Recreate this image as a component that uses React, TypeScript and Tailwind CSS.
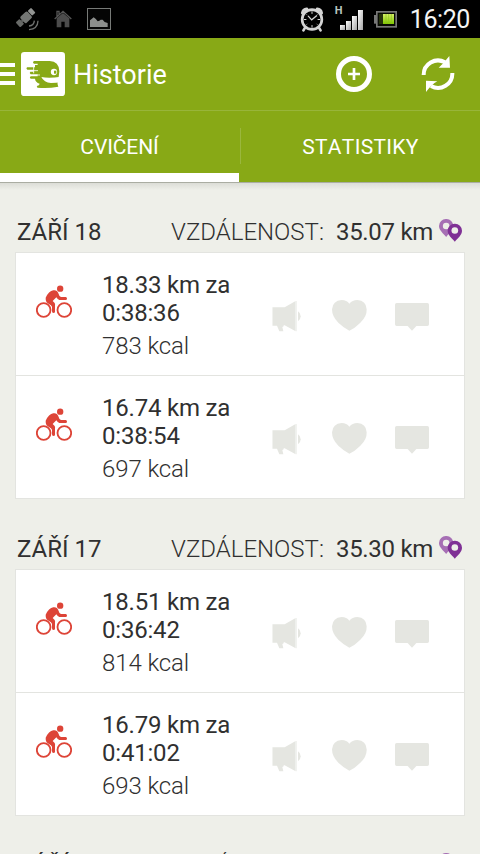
type Workout = {
  distance: string;
  time: string;
  kcal: string;
};

type Day = {
  label: string;
  total: string;
  workouts: Workout[];
};

const days: Day[] = [
  {
    label: "ZÁŘÍ 18",
    total: "35.07 km",
    workouts: [
      { distance: "18.33 km za", time: "0:38:36", kcal: "783 kcal" },
      { distance: "16.74 km za", time: "0:38:54", kcal: "697 kcal" },
    ],
  },
  {
    label: "ZÁŘÍ 17",
    total: "35.30 km",
    workouts: [
      { distance: "18.51 km za", time: "0:36:42", kcal: "814 kcal" },
      { distance: "16.79 km za", time: "0:41:02", kcal: "693 kcal" },
    ],
  },
  { label: "ZÁŘÍ 16", total: "35.12 km", workouts: [] },
];

function SatelliteIcon() {
  return (
    <svg width="24" height="24" viewBox="0 0 72 72" className="shrink-0">
      <g transform="rotate(-43 30 30)">
        <rect x="15" y="18" width="29" height="26" rx="5" fill="#747674" />
        <rect x="-4" y="21" width="16" height="20" rx="3" fill="#686a68" />
        <rect x="12" y="27" width="5" height="8" fill="#686a68" />
        <rect x="46" y="20" width="14" height="20" rx="3" fill="#929492" />
      </g>
      <path d="M39 57Q54 56 55 41M39 68Q65 66 66 41" fill="none" stroke="#707270" strokeWidth="4" />
    </svg>
  );
}

function HomeIcon() {
  return (
    <svg width="18" height="18" viewBox="0 0 54 54" className="shrink-0">
      <path d="M8 25L27 9l19 16v27H32V35H22v17H8z" fill="#4c4c4c" />
      <path d="M2 27L27 4l25 23M9 19V4h6v10" fill="none" stroke="#555" strokeWidth="4" />
    </svg>
  );
}

function PictureIcon() {
  return (
    <svg width="24" height="22" viewBox="0 0 72 66" className="shrink-0">
      <rect x="1.5" y="1.5" width="69" height="63" fill="#050505" stroke="#777a77" strokeWidth="3" />
      <path d="M9 57V37q6-4 11-9 7 5 12 12 6-1 9-5h6q3 7 15 10v12z" fill="#8c8e8c" />
    </svg>
  );
}

function AlarmIcon() {
  return (
    <svg width="24" height="25" viewBox="0 0 72 76" className="shrink-0">
      <g fill="none" stroke="#d4d4d4">
        <path d="M7 18Q9 7 20 6M65 18Q63 7 52 6" strokeWidth="9" strokeLinecap="round" />
        <path d="M14 64l-4 7M58 64l4 7" strokeWidth="8" strokeLinecap="round" />
        <circle cx="36" cy="38" r="30" strokeWidth="8" />
        <path d="M24 27l11 12 16-13" strokeWidth="4" />
        <path d="M36 13v8M36 55v8M11 38h8M53 38h8" strokeWidth="3" />
        <path d="M19 22l3 3M53 22l-3 3M19 54l3-3M53 54l-3-3" strokeWidth="2" />
      </g>
    </svg>
  );
}

function SignalIcon() {
  return (
    <svg width="28" height="24" viewBox="0 0 84 72" className="shrink-0">
      <defs>
        <linearGradient id="bars" x1="0" y1="0" x2="1" y2="1">
          <stop offset="0" stopColor="#fff" />
          <stop offset="1" stopColor="#a4a4a4" />
        </linearGradient>
      </defs>
      <g fill="url(#bars)">
        <rect x="12" y="54" width="15" height="15" />
        <rect x="30" y="42" width="15" height="27" />
        <rect x="48" y="27" width="15" height="42" />
        <rect x="66" y="9" width="15" height="60" />
      </g>
    </svg>
  );
}

function BatteryIcon() {
  return (
    <svg width="23" height="17" viewBox="0 0 69 51" className="shrink-0">
      <defs>
        <linearGradient id="charge" x1="0" y1="0" x2="0" y2="1">
          <stop offset="0" stopColor="#d5ef69" />
          <stop offset="1" stopColor="#7fc800" />
        </linearGradient>
      </defs>
      <rect x="0" y="12" width="8" height="26" fill="#777" />
      <rect x="8.5" y="2.5" width="58" height="45" fill="#090b05" stroke="#777" strokeWidth="5" />
      <path d="M15 9h12v30H15z" fill="#26320c" />
      <path d="M27 9h33v30H27z" fill="url(#charge)" />
      <path d="M36 9v30M44 9v30M52 9v30" stroke="#91bf20" strokeWidth="2" />
    </svg>
  );
}

function Logo() {
  return (
    <svg width="44" height="44" viewBox="0 0 132 132" className="shrink-0">
      <rect width="132" height="132" rx="10" fill="#fff" />
      <path
        d="M39 27H86Q114 28 115 58L112 83Q107 91 112 104Q81 110 50 107Q45 105 49 101Q55 101 56 95Q43 91 42 80H29Q24 77 29 73H50V67H29Q24 63 28 59H38V53H19Q14 50 18 46H42V39H50V35H39Q33 31 39 27Z"
        fill="#88a916"
      />
      <path d="M61 75Q84 80 120 74V90Q106 93 90 93Q69 92 61 75Z" fill="#fff" />
      <circle cx="99" cy="60" r="9.5" fill="#fff" />
      <path d="M99 56H106V65H99Z" fill="#88a916" />
      <path d="M38 40v24M29 56h22M49 69h8" stroke="#fff" strokeWidth="2.5" />
    </svg>
  );
}

function AddIcon() {
  return (
    <svg width="36" height="36" viewBox="0 0 108 108">
      <circle cx="54" cy="54" r="46.5" fill="none" stroke="#fff" strokeWidth="15" />
      <path d="M54 36v36M36 54h36" stroke="#fff" strokeWidth="8" />
    </svg>
  );
}

function RefreshIcon() {
  return (
    <svg width="34" height="36" viewBox="0 0 102 108">
      <g fill="none" stroke="#fff" strokeWidth="12">
        <path d="M8 57A43 43 0 0 1 72 19" />
        <path d="M94 51A43 43 0 0 1 30 90" />
      </g>
      <path d="M85 0L87 35H53Q68 22 85 0ZM15 108V74L49 76Q32 85 15 108Z" fill="#fff" />
    </svg>
  );
}

function CyclistIcon() {
  return (
    <svg width="36" height="33" viewBox="0 0 108 99" className="shrink-0">
      <g fill="none" stroke="#dd4437" strokeWidth="5.5">
        <circle cx="23" cy="75" r="20.5" />
        <circle cx="85" cy="75" r="20.5" />
      </g>
      <g fill="#dd4437">
        <circle cx="72.5" cy="11" r="9.5" />
        <path d="M29 38Q38 19 52 16Q63 14 67 25Q69 34 75 36H89Q93 37 93 40.500Q93 45 89 45H70Q65 44 61 37L50 48L56 54Q58 57 57 63V80Q57 84 52 84Q48 84 48 79V65Q46 60 39 57Q28 52 29 38Z" />
      </g>
    </svg>
  );
}

function MegaphoneIcon() {
  return (
    <svg width="29" height="31" viewBox="0 0 87 93" fill="#e5e6e1">
      <path d="M3 19H38L71 0V91L38 73H35V76L31 78L34 91H22L15 74H3Z" />
      <path d="M0 19h3v55H0z" fill="#f1f2ef" />
      <path d="M71 0h4v91h-4z" fill="#f1f2ef" />
      <path d="M78 31Q86 36 86 46Q86 56 78 61Z" />
    </svg>
  );
}

function HeartIcon() {
  return (
    <svg width="35" height="31" viewBox="0 0 105 93" fill="#e5e6e1">
      <path d="M52 11Q61 0 76 0Q103 2 104 28Q105 50 85 68Q68 85 52 92Q36 84 19 68Q0 50 0 28Q2 2 29 0Q44 0 52 11Z" />
    </svg>
  );
}

function CommentIcon() {
  return (
    <svg width="34" height="28" viewBox="0 0 102 84" fill="#e5e6e1">
      <path d="M5 0H97Q102 0 102 5V64Q102 69 97 69H64L51 83L38 69H5Q0 69 0 64V5Q0 0 5 0Z" />
    </svg>
  );
}

function PinsIcon() {
  return (
    <svg width="23" height="23" viewBox="0 0 69 69" className="shrink-0">
      <path
        fillRule="evenodd"
        d="M21.500 0A21 21 0 0 0 0 21C0 34 12 42 21.500 54C31 42 43 34 43 21A21 21 0 0 0 21.500 0ZM21.500 11A10 10 0 1 1 21.500 31A10 10 0 1 1 21.500 11Z"
        fill="#a66fb4"
      />
      <path
        d="M47.500 14A21 21 0 0 0 26 35C26 48 38 56 47.500 68C57 56 69 48 69 35A21 21 0 0 0 47.500 14Z"
        fill="#7f3095"
      />
      <circle cx="47.500" cy="34.500" r="10" fill="#eeefe9" />
    </svg>
  );
}

function StatusBar() {
  return (
    <div className="flex h-[38px] items-center bg-black pl-4 pr-2.5">
      <SatelliteIcon />
      <div className="ml-3.5 flex">
        <HomeIcon />
      </div>
      <div className="ml-[15px] flex">
        <PictureIcon />
      </div>
      <div className="ml-auto flex items-center">
        <div className="flex">
          <AlarmIcon />
        </div>
        <span className="-mt-[18px] ml-[11px] w-[8px] text-[11px] font-bold leading-none text-[#b9c6c0]">
          H
        </span>
        <div className="-ml-[7px] -mt-px flex">
          <SignalIcon />
        </div>
        <div className="ml-[10px] flex">
          <BatteryIcon />
        </div>
        <span className="ml-[13px] text-[25px] leading-none tracking-[-0.4px] text-[#f4f4f4]">
          16:20
        </span>
      </div>
    </div>
  );
}

function ActionBar() {
  return (
    <div className="flex h-[72px] items-center pr-[25px]">
      <div className="flex w-[15px] shrink-0 flex-col gap-[5px]">
        <div className="h-1 bg-white" />
        <div className="h-1 bg-white" />
        <div className="h-1 bg-white" />
      </div>
      <div className="ml-1.5 flex">
        <Logo />
      </div>
      <h1 className="ml-2 mt-[3px] text-[27px] leading-none text-white">Historie</h1>
      <button className="ml-auto">
        <AddIcon />
      </button>
      <button className="ml-[49px]">
        <RefreshIcon />
      </button>
    </div>
  );
}

function Tabs() {
  return (
    <div className="flex h-[72px] border-t border-[#98b53a] text-[21px] text-white [font-kerning:none]">
      <button className="flex w-[239px] items-center justify-center border-b-9 border-white pt-[11px] tracking-[-0.1px]">
        CVIČENÍ
      </button>
      <div className="ml-px mt-[17px] h-9 w-px bg-[#9ab73d]" />
      <button className="flex flex-1 items-center justify-center pt-0.5 tracking-[0.3px]">
        STATISTIKY
      </button>
    </div>
  );
}

function WorkoutRow({ workout }: { workout: Workout }) {
  return (
    <div className="flex h-[123px] border-b border-[#e3e4e0] pl-5 pr-[35px] last:h-[122px] last:border-b-0">
      <div className="pt-8">
        <CyclistIcon />
      </div>
      <div className="ml-[30px] pt-[18px] text-[24px] leading-7 tracking-[-0.2px] text-[#303030]">
        <div>{workout.distance}</div>
        <div>{workout.time}</div>
        <div className="mt-[5px] font-light tracking-[-0.1px]">{workout.kcal}</div>
      </div>
      <div className="ml-auto flex pt-[47px]">
        <div className="pt-px">
          <MegaphoneIcon />
        </div>
        <div className="ml-[31px]">
          <HeartIcon />
        </div>
        <div className="ml-7 pt-[3px]">
          <CommentIcon />
        </div>
      </div>
    </div>
  );
}

function DaySection({ day }: { day: Day }) {
  return (
    <section className="h-[317px] px-[15px]">
      <div className="flex h-[37px] items-start pl-0.5 pr-[3px] pt-[3px] text-[24px] leading-7 text-[#303030]">
        <span>{day.label}</span>
        <span className="ml-auto font-light">VZDÁLENOST:</span>
        <span className="ml-3 tracking-[-0.3px]">{day.total}</span>
        <div className="ml-1.5 mt-px">
          <PinsIcon />
        </div>
      </div>
      <div className="border border-[#e3e4e0] bg-white">
        {day.workouts.map((workout) => (
          <WorkoutRow key={workout.time} workout={workout} />
        ))}
      </div>
    </section>
  );
}

export default function App() {
  return (
    <div className="h-[854px] w-[480px] overflow-hidden bg-[#eeefe9] font-['Roboto',sans-serif]">
      <StatusBar />
      <header className="bg-[#88a916]">
        <ActionBar />
        <Tabs />
      </header>
      <div className="h-px bg-[#aaada2]" />
      <div className="h-[7px] bg-linear-to-b from-[#dcddd7] to-[#eeefe9]" />
      <main className="pt-[25px]">
        {days.map((day) => (
          <DaySection key={day.label} day={day} />
        ))}
      </main>
    </div>
  );
}
